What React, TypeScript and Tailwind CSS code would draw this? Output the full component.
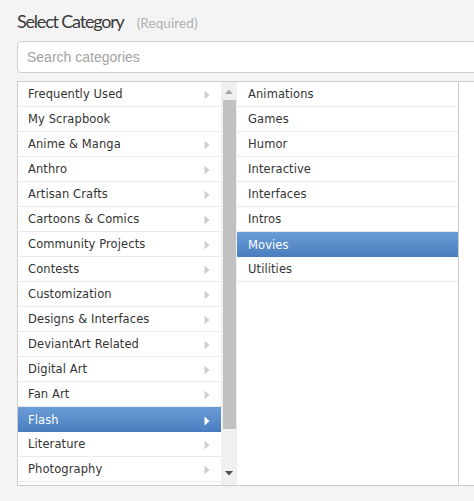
import React from "react";

const primary: { label: string; sub: boolean }[] = [
  { label: "Frequently Used", sub: true },
  { label: "My Scrapbook", sub: false },
  { label: "Anime & Manga", sub: true },
  { label: "Anthro", sub: true },
  { label: "Artisan Crafts", sub: true },
  { label: "Cartoons & Comics", sub: true },
  { label: "Community Projects", sub: true },
  { label: "Contests", sub: true },
  { label: "Customization", sub: true },
  { label: "Designs & Interfaces", sub: true },
  { label: "DeviantArt Related", sub: true },
  { label: "Digital Art", sub: true },
  { label: "Fan Art", sub: true },
  { label: "Flash", sub: true },
  { label: "Literature", sub: true },
  { label: "Photography", sub: true },
];

const flashItems = [
  "Animations",
  "Games",
  "Humor",
  "Interactive",
  "Interfaces",
  "Intros",
  "Movies",
  "Utilities",
];

function Caret({ light }: { light: boolean }) {
  return (
    <svg width="6" height="10" viewBox="0 0 6 10" className="shrink-0">
      <path d="M0.5 0.5 L5.5 5 L0.5 9.5 Z" fill={light ? "#ffffff" : "#cfcfcf"} />
    </svg>
  );
}

function Row({
  label,
  selected,
  caret,
  inset,
}: {
  label: string;
  selected: boolean;
  caret?: boolean;
  inset: string;
}) {
  const base = `h-[25px] shrink-0 flex items-center justify-between ${inset} pr-[11px] pt-[2px]`;
  return (
    <div
      className={
        selected
          ? `${base} bg-gradient-to-b from-[#6a9dd7] to-[#4a7dbf] text-white`
          : `${base} border-b border-[#ebebeb] text-[#333333]`
      }
    >
      <span className="text-[11.5px] leading-none tracking-[0.1px]">{label}</span>
      {caret ? <Caret light={selected} /> : null}
    </div>
  );
}

export default function App() {
  return (
    <div
      className="w-[474px] h-[501px] overflow-hidden bg-[#f4f4f4] pl-[17px] pt-[9px]"
      style={{ fontFamily: "'DejaVu Sans', Verdana, sans-serif" }}
    >
      <div className="flex items-baseline gap-[13px] h-[24px]">
        <h1
          className="text-[18px] leading-[24px] text-[#3a3a3a] tracking-[-1.2px]"
          style={{ fontFamily: "Lato, sans-serif" }}
        >
          Select Category
        </h1>
        <span
          className="text-[13.5px] text-[#b0b0b0] tracking-[0.1px]"
          style={{ fontFamily: "Lato, sans-serif" }}
        >
          (Required)
        </span>
      </div>

      <div className="mt-[8px] w-[480px] h-[32px] bg-white border border-[#d0d0d0] rounded-[4px] flex items-center pl-[9px]">
        <span
          className="text-[14px] text-[#a3a3a3]"
          style={{ fontFamily: "'Liberation Sans', Arial, sans-serif" }}
        >
          Search categories
        </span>
      </div>

      <div className="mt-[8px] w-[480px] h-[405px] bg-white border border-[#cccccc] flex overflow-hidden">
        <div className="w-[203px] shrink-0 flex flex-col overflow-hidden">
          {primary.map((p) => (
            <Row
              key={p.label}
              label={p.label}
              caret={p.sub}
              selected={p.label === "Flash"}
              inset="pl-[10px]"
            />
          ))}
        </div>

        <div className="w-[16px] shrink-0 bg-[#f0f0f0] flex flex-col items-center">
          <div className="h-[18px] flex items-center justify-center">
            <svg width="8" height="5" viewBox="0 0 8 5">
              <path d="M0 5 L4 0.5 L8 5 Z" fill="#a8a8a8" />
            </svg>
          </div>
          <div className="w-[13px] h-[329px] bg-[#c1c1c1]" />
          <div className="flex-1" />
          <div className="h-[17px] flex items-start justify-center pt-[3px]">
            <svg width="8" height="5" viewBox="0 0 8 5">
              <path d="M0 0 L8 0 L4 4.5 Z" fill="#505050" />
            </svg>
          </div>
        </div>

        <div className="w-[222px] shrink-0 flex flex-col border-r border-[#cccccc]">
          {flashItems.map((s) => (
            <Row key={s} label={s} selected={s === "Movies"} inset="pl-[11px]" />
          ))}
        </div>

        <div className="flex-1 bg-white" />
      </div>
    </div>
  );
}
